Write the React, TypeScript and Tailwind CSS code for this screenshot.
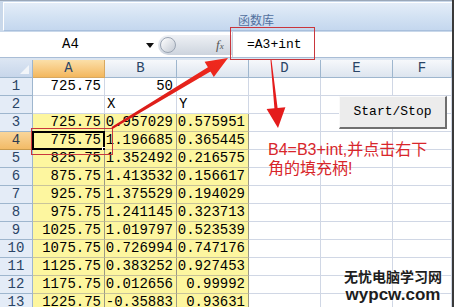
import React from "react";

const mono = { fontFamily: '"Liberation Mono", "DejaVu Sans Mono", monospace' } as const;

const rows: [string, string, string][] = [
  ["725.75", "0.957029", "0.575951"],
  ["775.75", "1.196685", "0.365445"],
  ["825.75", "1.352492", "0.216575"],
  ["875.75", "1.413532", "0.156617"],
  ["925.75", "1.375529", "0.194029"],
  ["975.75", "1.241145", "0.323713"],
  ["1025.75", "1.019797", "0.523539"],
  ["1075.75", "0.726994", "0.747176"],
  ["1125.75", "0.383252", "0.927453"],
  ["1175.75", "0.012656", "0.99992"],
  ["1225.75", "-0.35883", "0.93631"],
];

function RowHeader({ n, active }: { n: number; active?: boolean }) {
  return (
    <div
      className={
        active
          ? "w-[33px] shrink-0 flex items-center justify-center border-r border-b border-[#c89a4e] bg-gradient-to-b from-[#f9d59a] to-[#f2bb66] text-[#2a3a52] text-[14px]"
          : "w-[33px] shrink-0 flex items-center justify-center border-r border-b border-[#9eb6ce] bg-[#e4ecf7] text-[#2a4466] text-[14px]"
      }
    >
      {n}
    </div>
  );
}

function WhiteCell({ children, align = "right", flex }: { children?: React.ReactNode; align?: "left" | "right"; flex?: boolean }) {
  return (
    <div
      className={
        (flex ? "flex-1 " : "w-[72px] shrink-0 ") +
        "flex items-center border-r border-b border-[#d0d7e5] bg-white text-[14px] text-black overflow-hidden whitespace-nowrap " +
        (align === "right" ? "justify-end pr-[3px]" : "justify-start pl-[2px]")
      }
    >
      {children}
    </div>
  );
}

function YellowCell({ children, selected }: { children?: React.ReactNode; selected?: boolean }) {
  return (
    <div className="relative w-[72px] shrink-0 flex items-center justify-end pr-[3px] border-r border-b border-r-[#9c9a85] border-b-[#c9c49b] bg-[#fdf69f] text-[14px] text-black whitespace-nowrap">
      {children}
      {selected && (
        <>
          <div className="absolute left-[-1px] top-[-1px] right-[-1px] bottom-[-1px] border-2 border-black" />
          <div className="absolute right-[-4px] bottom-[-4px] w-[6px] h-[6px] bg-black border border-white" />
        </>
      )}
    </div>
  );
}

export default function App() {
  const colLetters = ["A", "B", "C", "D", "E", "F"];
  return (
    <div className="relative w-[454px] h-[307px] overflow-hidden bg-white border-r-2 border-[#3a3a3a]" style={mono}>
      {/* Ribbon */}
      <div className="h-[32px] bg-[#c9d8ea] pt-[1px] border-t border-[#9aa7b8]">
        <div className="h-[29px] ml-[3px] border-l border-t border-[#ffffff] bg-gradient-to-b from-[#e4edf8] via-[#d3e2f3] to-[#c4d7ee] flex items-end pb-[3px] pl-[234px] border-b border-b-[#a8bfdc]">
          <span className="text-[12px] leading-[14px] text-[#52709e]" style={{ fontFamily: '"Noto Sans CJK SC", sans-serif' }}>
            函数库
          </span>
        </div>
      </div>
      {/* Formula bar */}
      <div className="h-[26px] bg-white flex items-center border-b border-[#a9bdd6]">
        <div className="w-[158px] shrink-0 h-full flex items-center relative">
          <span className="ml-[62px] text-[14px] text-black">A4</span>
          <svg className="absolute left-[146px] top-[11px]" width="8" height="5" viewBox="0 0 8 5">
            <path d="M0 0 H8 L4 5 Z" fill="#111" />
          </svg>
        </div>
        <div className="w-[74px] shrink-0 h-[20px] rounded-l-full bg-gradient-to-b from-[#eef1f5] to-[#cdd4de] relative flex items-center">
          <div className="w-[16px] h-[16px] ml-[2px] rounded-full border border-[#9aa4b2] bg-gradient-to-br from-[#ffffff] to-[#c3cad4]" />
          <span className="absolute left-[58px] text-[13px] italic text-[#555]" style={{ fontFamily: '"Liberation Serif", serif' }}>
            f<span className="text-[9px]">x</span>
          </span>
        </div>
        <div className="w-[1px] h-full bg-[#c7cfda]" />
        <span className="ml-[14px] text-[13px] text-black">=A3+int</span>
      </div>
      <div className="h-[2px] bg-[#dbe5f1]" />
      {/* Column header */}
      <div className="flex h-[18px]">
        <div className="relative w-[33px] shrink-0 border-r border-b border-[#9eb6ce] bg-gradient-to-b from-[#dbe5f3] to-[#c7d6ea]">
          <svg className="absolute right-[3px] bottom-[3px]" width="9" height="9" viewBox="0 0 9 9">
            <path d="M9 0 V9 H0 Z" fill="#f2f5f9" />
          </svg>
        </div>
        {colLetters.map((c, i) => (
          <div
            key={c}
            className={
              (i === 5 ? "flex-1 " : "w-[72px] shrink-0 ") +
              (i === 0
                ? "bg-gradient-to-b from-[#fbdfa8] to-[#f3b75c] border-[#d8a860] "
                : "bg-gradient-to-b from-[#f6f8fb] to-[#dde5ef] border-[#9eb6ce] ") +
              "flex items-center justify-center border-r border-b text-[14px] text-[#2a4466]"
            }
          >
            {c}
          </div>
        ))}
      </div>
      {/* Row 1 */}
      <div className="flex h-[18px]">
        <RowHeader n={1} />
        <WhiteCell>725.75</WhiteCell>
        <WhiteCell>50</WhiteCell>
        <WhiteCell />
        <WhiteCell />
        <WhiteCell />
        <WhiteCell flex />
      </div>
      {/* Row 2 */}
      <div className="flex h-[18px]">
        <RowHeader n={2} />
        <WhiteCell />
        <WhiteCell align="left">X</WhiteCell>
        <WhiteCell align="left">Y</WhiteCell>
        <WhiteCell />
        <WhiteCell />
        <WhiteCell flex />
      </div>
      {rows.map((r, i) => (
        <div key={i} className="flex h-[18px]">
          <RowHeader n={i + 3} active={i === 1} />
          <YellowCell selected={i === 1}>{r[0]}</YellowCell>
          <YellowCell>{r[1]}</YellowCell>
          <YellowCell>{r[2]}</YellowCell>
          <WhiteCell />
          <WhiteCell />
          <WhiteCell flex />
        </div>
      ))}

      {/* Overlays: red boxes */}
      <div className="absolute left-[230px] top-[27px] w-[85px] h-[33px] border-[1.5px] border-[#c9363c]" />
      <div className="absolute left-[31px] top-[128px] w-[82px] h-[27px] border-[1.5px] border-[#c9363c]" />

      {/* Arrows */}
      <svg className="absolute left-0 top-0 pointer-events-none" width="454" height="307" viewBox="0 0 454 307">
        <defs>
          <linearGradient id="ag1" x1="0" y1="1" x2="1" y2="0">
            <stop offset="0" stopColor="#d41818" />
            <stop offset="1" stopColor="#f02a1e" />
          </linearGradient>
        </defs>
        <polygon
          points="112.5,128.9 210.5,71.5 213.8,77 228,58 204.6,61.8 207.9,67.3 111.5,127.1"
          fill="url(#ag1)"
        />
        <polygon
          points="271.5,60 277.6,107.9 285.4,107.2 278,128 266.6,109.1 274.4,108.2 270.5,60"
          fill="#e41c1c"
        />
      </svg>

      {/* Annotation text */}
      <div
        className="absolute left-[268px] top-[140px] text-[16px] leading-[19px] text-[#d8262b] whitespace-nowrap"
        style={{ fontFamily: '"Liberation Sans", "Noto Sans CJK SC", sans-serif' }}
      >
        <div>B4=B3+int,并点击右下</div>
        <div>角的填充柄!</div>
      </div>

      {/* Start/Stop button */}
      <div className="absolute left-[339px] top-[96px] w-[108px] h-[33px] bg-[#ececec] border-t border-l border-[#fafafa] border-r-2 border-b-2 border-r-[#6f6f6f] border-b-[#6f6f6f] flex items-center justify-center text-[13px] text-black">
        Start/Stop
      </div>

      {/* Watermark */}
      <div
        className="absolute left-[338px] top-[268px] w-[110px] flex flex-col items-center font-bold text-[#1d1d1d]"
        style={{ fontFamily: '"Liberation Sans", "Noto Sans CJK SC", sans-serif', textShadow: "0 0 2px #fff, 0 0 2px #fff" }}
      >
        <div className="text-[14px] leading-[18px]">无忧电脑学习网</div>
        <div className="text-[17px] leading-[18px]">wypcw.com</div>
      </div>
    </div>
  );
}
